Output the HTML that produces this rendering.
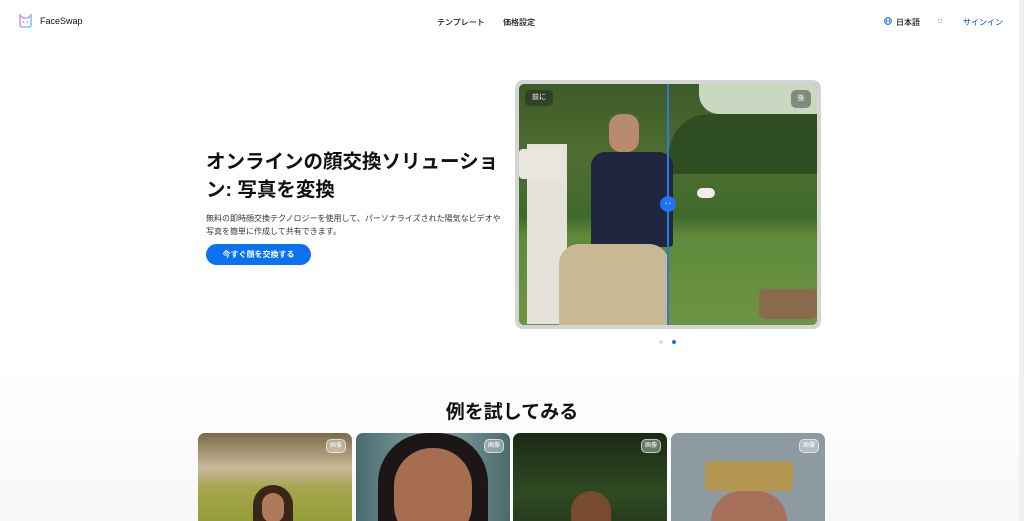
<!DOCTYPE html>
<html><head><meta charset="utf-8"><style>
*{margin:0;padding:0;box-sizing:border-box}
html,body{width:1024px;height:521px;overflow:hidden}
body{background:#fff;font-family:"Liberation Sans","Noto Sans CJK JP",sans-serif;color:#111;position:relative}
.a{position:absolute}
.nav{font-size:8px;font-weight:500}
.tag{position:absolute;top:6px;right:6px;width:20px;height:14px;border-radius:5px;background:rgba(255,255,255,.35);border:1px solid rgba(255,255,255,.6);color:#fff;font-size:6px;text-align:center;line-height:12px}
.card{position:absolute;top:433px;width:154px;height:100px;border-radius:7px;overflow:hidden}
</style></head><body>
<div class="a" style="left:0;top:370px;width:1024px;height:151px;background:linear-gradient(#fff,#f6f7f9)"></div>
<div class="a" style="right:0;top:0;width:5px;height:521px;background:#f0f0f0"></div>
<svg class="a" style="left:18px;top:14px" width="15" height="14" viewBox="0 0 15 14"><defs><linearGradient id="g" x1="0" y1="0" x2="1" y2="1"><stop offset="0" stop-color="#e48cf0"/><stop offset="1" stop-color="#6ad0f5"/></linearGradient></defs><path d="M2 1 L5 4 H10 L13 1 V11 Q13 13 11 13 H4 Q2 13 2 11Z" fill="none" stroke="url(#g)" stroke-width="1.6"/><circle cx="5.5" cy="8" r=".9" fill="#a9c"/><circle cx="9.5" cy="8" r=".9" fill="#a9c"/></svg>
<div class="a" style="left:40px;top:16px;font-size:9px;font-weight:500">FaceSwap</div>
<div class="a nav" style="left:437px;top:17px">テンプレート</div>
<div class="a nav" style="left:503px;top:17px">価格設定</div>
<svg class="a" style="left:884px;top:17px" width="8" height="8" viewBox="0 0 8 8"><circle cx="4" cy="4" r="3.4" fill="none" stroke="#1a6fd8" stroke-width=".9"/><ellipse cx="4" cy="4" rx="1.5" ry="3.4" fill="none" stroke="#1a6fd8" stroke-width=".7"/><path d="M.6 4H7.4" stroke="#1a6fd8" stroke-width=".7"/></svg>
<div class="a nav" style="left:896px;top:17px">日本語</div>
<div class="a" style="left:936px;top:15px;font-size:9px;color:#4a8ee0">☼</div>
<div class="a nav" style="left:963px;top:17px;color:#1a73e8">サインイン</div>

<div class="a" style="left:206px;top:148px;font-size:19.5px;font-weight:700;line-height:28px;width:305px;line-break:anywhere">オンラインの顔交換ソリューション: 写真を変換</div>
<div class="a" style="left:206px;top:212px;font-size:8px;line-height:13px;color:#333;width:299px">無料の即時顔交換テクノロジーを使用して、パーソナライズされた陽気なビデオや写真を簡単に作成して共有できます。</div>
<div class="a" style="left:206px;top:244px;width:105px;height:21px;border-radius:11px;background:#0a72f0;color:#fff;font-size:8px;font-weight:700;text-align:center;line-height:21px">今すぐ顔を交換する</div>

<div class="a" style="left:515px;top:80px;width:306px;height:249px;border-radius:8px;background:#d4d4d4"></div>
<div class="a" style="left:519px;top:84px;width:298px;height:241px;border-radius:5px;overflow:hidden;background:linear-gradient(#3d5a2a 0%,#4f6e30 30%,#3f6a2c 55%,#6b8f3c 65%,#5f8535 100%)">
 <div class="a" style="left:180px;top:0;width:118px;height:30px;background:#c9d8c0;border-radius:0 0 0 20px"></div>
 <div class="a" style="left:150px;top:30px;width:148px;height:60px;background:#2f4d22;border-radius:40px 0 0 0"></div>
 <div class="a" style="left:0;top:150px;width:298px;height:91px;background:linear-gradient(#5d8a3a,#6c9443)"></div>
 <div class="a" style="left:8px;top:60px;width:40px;height:180px;background:#e5e2da"></div>
 <div class="a" style="left:0;top:65px;width:45px;height:30px;background:#e8e6df;border-radius:4px"></div>
 <div class="a" style="left:90px;top:30px;width:30px;height:38px;border-radius:12px;background:#b88a70"></div>
 <div class="a" style="left:72px;top:68px;width:82px;height:95px;border-radius:14px 14px 4px 4px;background:#1e2640"></div>
 <div class="a" style="left:40px;top:160px;width:110px;height:81px;border-radius:20px 20px 0 0;background:#c8b894"></div>
 <div class="a" style="left:240px;top:205px;width:58px;height:30px;border-radius:6px;background:#8a6a4a"></div>
 <div class="a" style="left:178px;top:104px;width:18px;height:10px;border-radius:5px;background:#eee"></div>
 <div class="a" style="left:6px;top:6px;width:28px;height:16px;border-radius:5px;background:rgba(30,30,30,.45);color:#fff;font-size:7px;text-align:center;line-height:16px">前に</div>
 <div class="a" style="right:6px;top:6px;width:20px;height:18px;border-radius:5px;background:rgba(60,60,60,.5);color:#fff;font-size:7px;text-align:center;line-height:18px">後</div>
 <div class="a" style="left:148px;top:0;width:2px;height:241px;background:#2f7ad8"></div>
 <div class="a" style="left:141px;top:112px;width:16px;height:16px;border-radius:50%;background:#1d74f2;color:#fff;font-size:6px;text-align:center;line-height:16px">‹ ›</div>
</div>
<div class="a" style="left:659px;top:340px;width:4px;height:4px;border-radius:50%;background:#ddd"></div>
<div class="a" style="left:672px;top:340px;width:4px;height:4px;border-radius:50%;background:#1a73e8"></div>

<div class="a" style="left:0;width:1024px;top:397px;text-align:center;font-size:19px;font-weight:700">例を試してみる</div>
<div class="card" style="left:198px;background:linear-gradient(#7b6a48 0%,#c9b99a 35%,#a9a550 55%,#8c9a30 100%)"><div class="a" style="left:55px;top:52px;width:40px;height:60px;border-radius:20px;background:#3a2618"></div><div class="a" style="left:64px;top:60px;width:22px;height:30px;border-radius:11px;background:#b07a58"></div><div class="tag">画像</div></div>
<div class="card" style="left:356px;background:linear-gradient(90deg,#4a6b6e,#88a4a8 50%,#4a6b6e)"><div class="a" style="left:22px;top:0;width:110px;height:100px;border-radius:50px 50px 0 0;background:#1c1716"></div><div class="a" style="left:38px;top:15px;width:78px;height:95px;border-radius:38px;background:#a66d50"></div><div class="tag">画像</div></div>
<div class="card" style="left:513px;background:linear-gradient(#1b2a16,#2f4a22 60%,#24361a)"><div class="a" style="left:58px;top:58px;width:40px;height:50px;border-radius:20px;background:#7a4a30"></div><div class="tag">画像</div></div>
<div class="card" style="left:671px;background:#8d9aa1"><div class="a" style="left:34px;top:28px;width:88px;height:30px;background:#b49650;border-radius:4px"></div><div class="a" style="left:40px;top:58px;width:76px;height:50px;border-radius:30px 30px 0 0;background:#a6705a"></div><div class="tag">画像</div></div>
</body></html>
